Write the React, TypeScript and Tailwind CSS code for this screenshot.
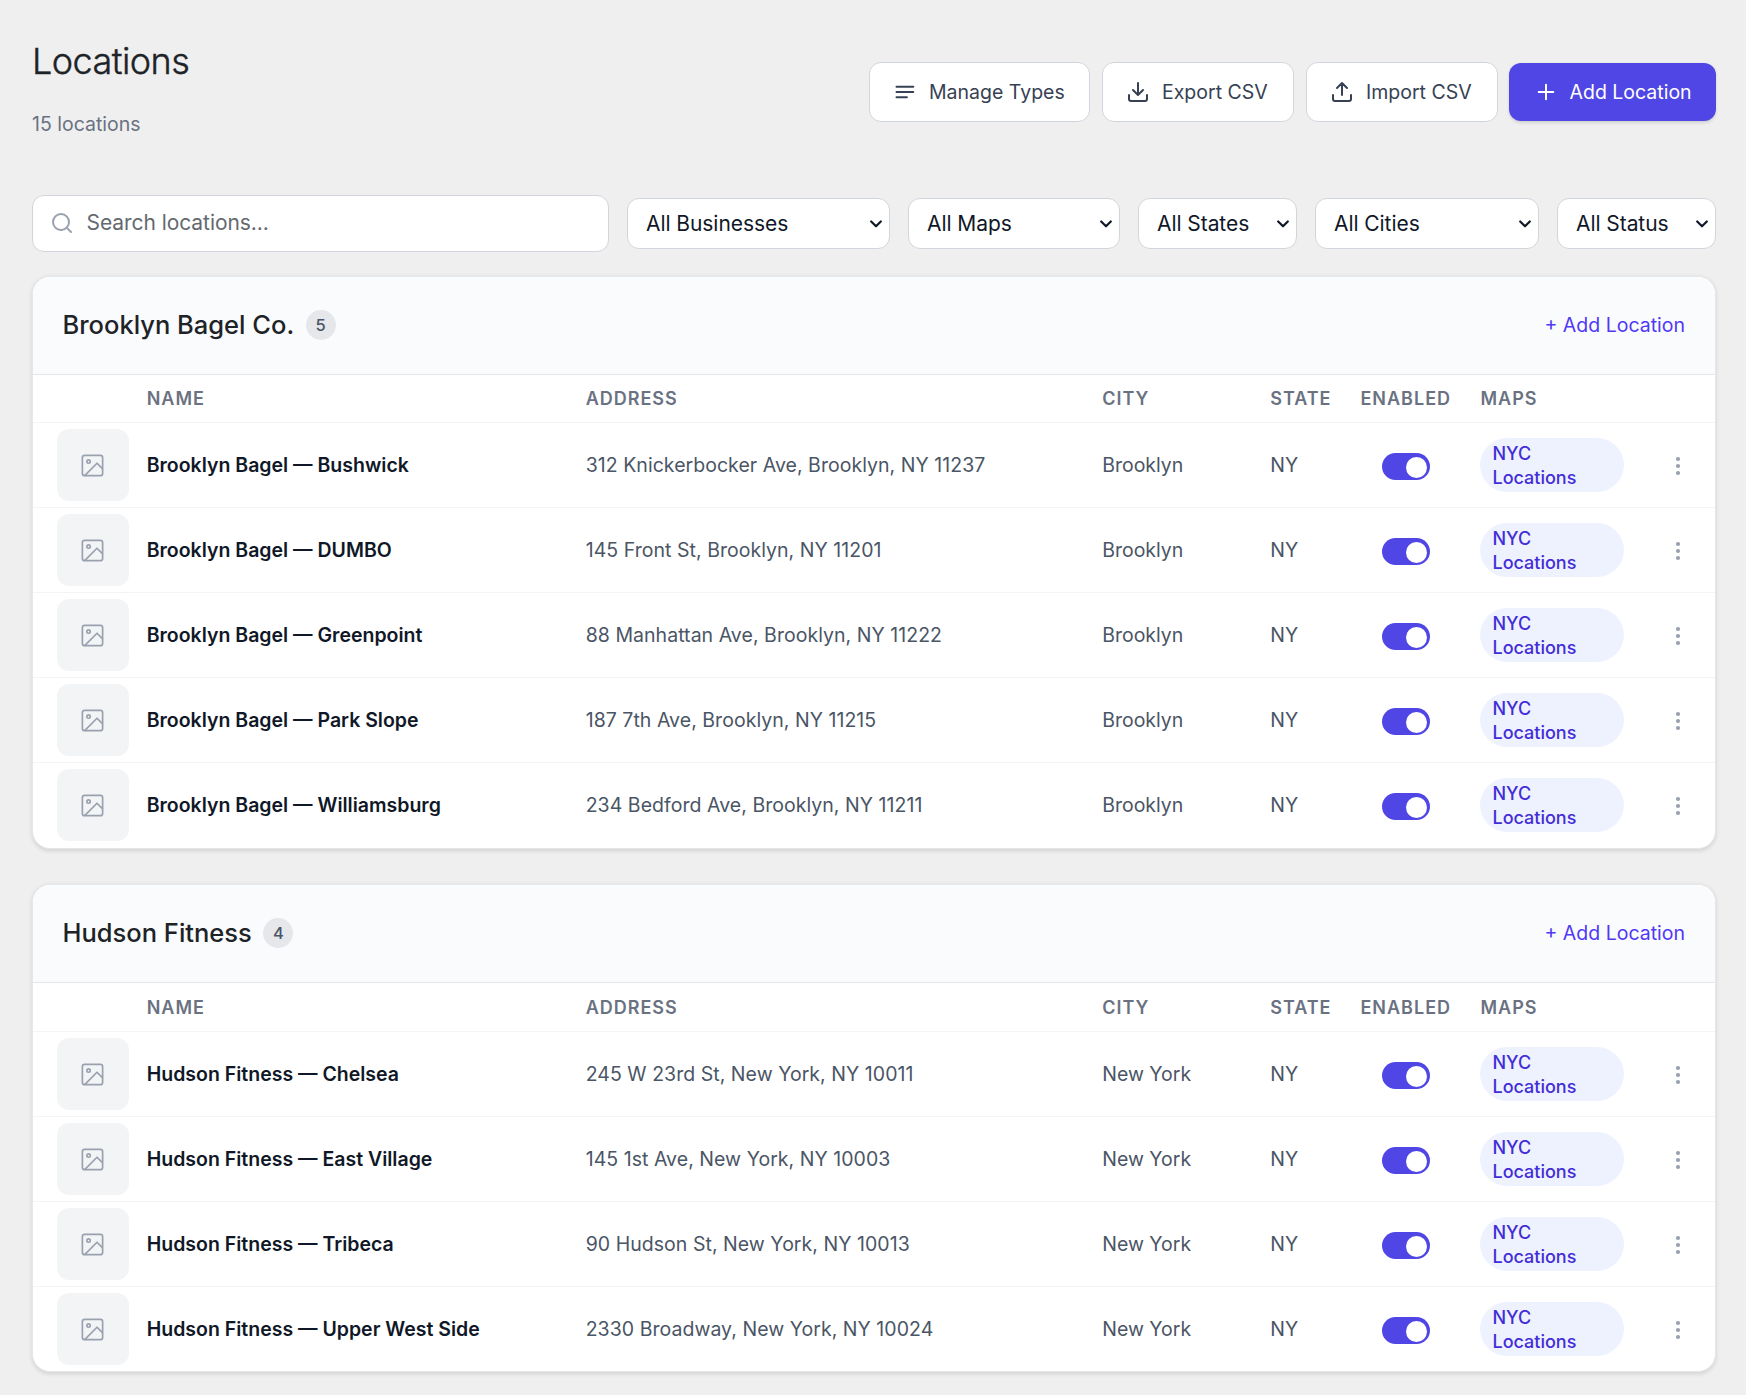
import type { ReactNode } from "react";

interface Location {
	name: string;
	address: string;
	city: string;
}

interface Business {
	name: string;
	locations: Location[];
	cardClass: string;
	headClass: string;
}

const BUSINESSES: Business[] = [
	{
		name: "Brooklyn Bagel Co.",
		cardClass: "h-[573px]",
		headClass: "h-12",
		locations: [
			{ name: "Brooklyn Bagel — Bushwick", address: "312 Knickerbocker Ave, Brooklyn, NY 11237", city: "Brooklyn" },
			{ name: "Brooklyn Bagel — DUMBO", address: "145 Front St, Brooklyn, NY 11201", city: "Brooklyn" },
			{ name: "Brooklyn Bagel — Greenpoint", address: "88 Manhattan Ave, Brooklyn, NY 11222", city: "Brooklyn" },
			{ name: "Brooklyn Bagel — Park Slope", address: "187 7th Ave, Brooklyn, NY 11215", city: "Brooklyn" },
			{ name: "Brooklyn Bagel — Williamsburg", address: "234 Bedford Ave, Brooklyn, NY 11211", city: "Brooklyn" },
		],
	},
	{
		name: "Hudson Fitness",
		cardClass: "h-[488px]",
		headClass: "h-[49px]",
		locations: [
			{ name: "Hudson Fitness — Chelsea", address: "245 W 23rd St, New York, NY 10011", city: "New York" },
			{ name: "Hudson Fitness — East Village", address: "145 1st Ave, New York, NY 10003", city: "New York" },
			{ name: "Hudson Fitness — Tribeca", address: "90 Hudson St, New York, NY 10013", city: "New York" },
			{ name: "Hudson Fitness — Upper West Side", address: "2330 Broadway, New York, NY 10024", city: "New York" },
		],
	},
];

const FILTERS = [
	{ label: "All Businesses", width: "w-[263px]" },
	{ label: "All Maps", width: "w-[212px]" },
	{ label: "All States", width: "w-[159px]" },
	{ label: "All Cities", width: "w-[224px]" },
	{ label: "All Status", width: "w-[159px]" },
];

const COLUMNS =
	"grid grid-cols-[113.7px_439px_516.5px_168px_90.3px_120px_161px_1fr] items-center";

function Icon({ children, className = "size-6" }: { children: ReactNode; className?: string }) {
	return (
		<svg
			viewBox="0 0 24 24"
			fill="none"
			stroke="currentColor"
			strokeWidth={2}
			strokeLinecap="round"
			strokeLinejoin="round"
			className={`shrink-0 ${className}`}
		>
			{children}
		</svg>
	);
}

function ToolbarButton({ label, width, children }: { label: string; width: string; children: ReactNode }) {
	return (
		<button
			className={`flex h-[60px] items-center gap-3 whitespace-nowrap rounded-xl border border-[#d1d5dc] bg-white pl-[23px] text-[19.5px] text-[#364153] ${width}`}
		>
			<Icon>{children}</Icon>
			<span className="pt-0.5">{label}</span>
		</button>
	);
}

function Toggle() {
	return (
		<span className="mt-[3px] ml-[21.5px] flex h-[27px] w-12 justify-end rounded-full bg-[#4f46e5] pt-1 pr-[3px]">
			<span className="size-[21px] rounded-full bg-white" />
		</span>
	);
}

function LocationRow({ location }: { location: Location }) {
	return (
		<div className={`${COLUMNS} h-[85px] border-b border-[#f3f4f6] text-[19.5px] text-[#4a5565] last:border-transparent`}>
			<div className="ml-6 flex size-[72px] items-center justify-center rounded-xl bg-[#f3f4f6] text-[#99a1af]">
				<svg
					viewBox="0 0 24 24"
					fill="none"
					stroke="currentColor"
					strokeWidth={1.5}
					strokeLinejoin="round"
					className="mr-px size-[27px]"
				>
					<rect x="3" y="3" width="18" height="18" rx="2" />
					<circle cx="8.5" cy="8.5" r="1.5" />
					<path d="M21 15l-5-5L5 21" />
				</svg>
			</div>
			<div className="pt-0.5 font-semibold text-[#101828]">{location.name}</div>
			<div className="pt-0.5 tracking-[0.002em]">{location.address}</div>
			<div className="pt-0.5">{location.city}</div>
			<div className="pt-0.5">NY</div>
			<Toggle />
			<div className="h-[54px] w-36 rounded-full bg-[#eef2ff] pt-1 pl-3 text-[18px] leading-6 font-medium text-[#432dd7]">
				<span className="block w-[90px]">NYC Locations</span>
			</div>
			<svg viewBox="0 0 24 24" fill="#99a1af" className="mt-px size-6 justify-self-center">
				<circle cx="12" cy="5" r="2.1" />
				<circle cx="12" cy="12" r="2.1" />
				<circle cx="12" cy="19" r="2.1" />
			</svg>
		</div>
	);
}

function BusinessCard({ business }: { business: Business }) {
	return (
		<section
			className={`overflow-hidden rounded-[18px] border border-[#e5e7eb] bg-white shadow-[0_1.5px_4.5px_rgba(0,0,0,0.12)] ${business.cardClass}`}
		>
			<div className="flex h-[98px] items-center justify-between border-b border-[#e5e7eb] bg-[#fafbfd] pr-[30px] pb-px pl-[29.5px]">
				<div className="flex items-center gap-[11.5px]">
					<h2 className="pt-px text-[25.5px] font-medium text-[#1d2327]">{business.name}</h2>
					<span className="flex size-[30px] items-center justify-center rounded-full bg-[#e5e7eb] text-[16.5px] font-medium text-[#4a5565]">
						{business.locations.length}
					</span>
				</div>
				<button className="pt-0.5 text-[19.5px] text-[#4f39f6]">+ Add Location</button>
			</div>
			<div
				className={`${COLUMNS} border-b border-[#f3f4f6] text-[18px] font-semibold tracking-[0.055em] text-[#6a7282] uppercase ${business.headClass}`}
			>
				<span />
				<span>Name</span>
				<span>Address</span>
				<span>City</span>
				<span>State</span>
				<span>Enabled</span>
				<span>Maps</span>
				<span />
			</div>
			<div>
				{business.locations.map((l) => (
					<LocationRow key={l.name} location={l} />
				))}
			</div>
		</section>
	);
}

export default function App() {
	return (
		<main className="h-[1395px] overflow-hidden bg-[#efefef] pt-[37px] pr-[30px] pl-8 font-['Inter',sans-serif] antialiased">
			<header className="flex justify-between">
				<div>
					<h1 className="text-[36px] leading-[48px] font-light tracking-[-0.015em] text-[#1d2327] [-webkit-text-stroke:0.4px_#1d2327]">
						Locations
					</h1>
					<p className="mt-6 text-[19.5px] leading-[30px] text-[#6a7282]">15 locations</p>
				</div>
				<div className="mt-[25px] flex h-[60px] items-center gap-3">
					<ToolbarButton label="Manage Types" width="w-[221px]">
						<path d="M3.5 6.8h16.8M3.5 12h16.8M3.5 17.2h10.4" />
					</ToolbarButton>
					<ToolbarButton label="Export CSV" width="w-[192px]">
						<path d="M21 15v4a2 2 0 0 1-2 2H5a2 2 0 0 1-2-2v-4M7 10l5 5 5-5M12 15V3" />
					</ToolbarButton>
					<ToolbarButton label="Import CSV" width="w-[192px]">
						<path d="M21 15v4a2 2 0 0 1-2 2H5a2 2 0 0 1-2-2v-4M17 8l-5-5-5 5M12 3v12" />
					</ToolbarButton>
					<button className="-ml-px flex h-[58px] w-[207px] items-center gap-3 rounded-xl bg-[#4f46e5] pl-[24.5px] text-[19.5px] whitespace-nowrap text-white shadow-[0_1.5px_3px_rgba(0,0,0,0.12)]">
						<Icon>
							<path d="M12 4.7v14.6M4.7 12h14.6" />
						</Icon>
						<span className="pt-0.5">Add Location</span>
					</button>
				</div>
			</header>

			<div className="mt-14 flex items-center gap-[18px]">
				<div className="flex h-[57px] w-[577px] items-center gap-[13px] rounded-xl border border-[#d1d5dc] bg-white pb-px pl-[16.5px] text-[21px] text-[#646970]">
					<Icon className="size-6 text-[#99a1af]">
						<circle cx="11" cy="11" r="8" />
						<path d="M21 21l-4.35-4.35" />
					</Icon>
					<span className="tracking-[-0.003em]">Search locations...</span>
				</div>
				{FILTERS.map((f) => (
					<div
						key={f.label}
						className={`flex h-[51px] items-center justify-between rounded-xl border border-[#d1d5dc] bg-white pr-[7.5px] pl-[18px] text-[21px] tracking-[-0.003em] whitespace-nowrap text-[#101828] ${f.width}`}
					>
						{f.label}
						<svg
							viewBox="0 0 12 8"
							fill="none"
							stroke="currentColor"
							strokeWidth={2.2}
							strokeLinecap="round"
							strokeLinejoin="round"
							className="h-2 w-3"
						>
							<path d="M1.2 1.5L6 6.3l4.8-4.8" />
						</svg>
					</div>
				))}
			</div>

			<div className="mt-6 flex flex-col gap-[35px]">
				{BUSINESSES.map((b) => (
					<BusinessCard key={b.name} business={b} />
				))}
			</div>
		</main>
	);
}
